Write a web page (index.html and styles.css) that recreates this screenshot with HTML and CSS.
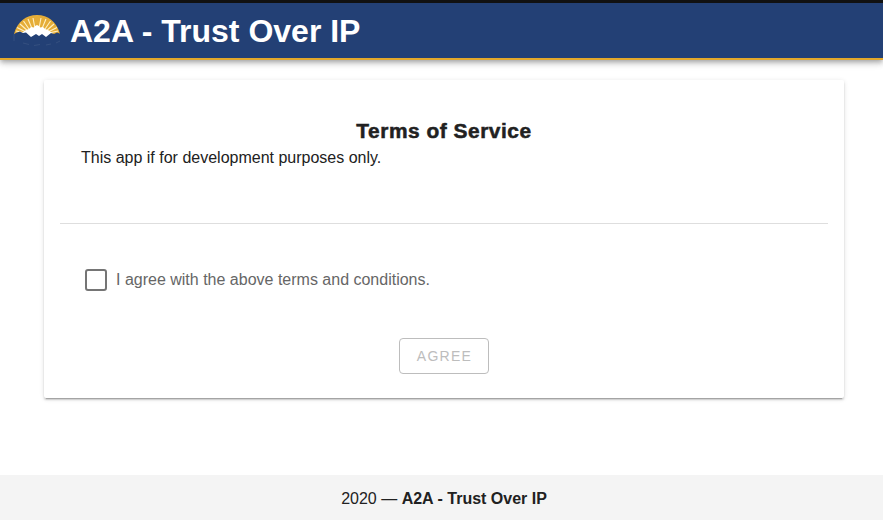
FILE: index.html
```html
<!DOCTYPE html>
<html lang="en">
<head>
<meta charset="utf-8">
<title>A2A - Trust Over IP</title>
<link rel="stylesheet" href="styles.css">
</head>
<body>
<header class="app-bar">
  <svg class="logo" viewBox="0 0 50 35" aria-hidden="true">
    <path d="M1 20C4 8 13 1 24 1s20 7 23 19l-7 1-5 2H13l-5-2z" fill="#e5ad38"/>
    <g stroke="#fff0c4" stroke-width="1.100" fill="none">
      <path d="M22.500 17L20 4M25.500 17L28 4M20 17L15 5M28 17l5-12M18 18L10.500 7M30 18l7.500-11M16 18L7 10M32 18l9-8M14 18.500L4 13.500M34 18.500l10-5M12 19l-9-2M36 19l9-2"/>
    </g>
    <path d="M8 20l4-3.500 4-1.500 2-2 3 .5 1-1.500 2-1 2 1 1 1.500 3-.5 2 2 4 1.500 4 3.500-5 4H13z" fill="#fff"/>
    <path d="M1 20l3-1.500 3-1 3 1.500 3-.5 5 4.500 5-3 3 2 3-2 4 3 5-4 3 1 3-1.500 4 1.500v6H1z" fill="#234075"/>
    <path d="M1 20v7M10 29l6 1.500m5 1l6-1m6 .5l5-1m5-1l4-2" fill="none" stroke="#3c5684" stroke-width=".7"/>
  </svg>
  <h1 class="app-title">A2A - Trust Over IP</h1>
</header>
<main class="content">
  <section class="card">
    <h2 class="card-title">Terms of Service</h2>
    <p class="terms">This app if for development purposes only.</p>
    <hr class="divider">
    <label class="consent"><input class="checkbox" type="checkbox"><span>I agree with the above terms and conditions.</span></label>
    <button class="agree" disabled>AGREE</button>
  </section>
</main>
<footer class="footer"><span>2020 — <strong>A2A - Trust Over IP</strong></span></footer>
</body>
</html>
```
FILE: styles.css
```css
* { box-sizing: border-box; }
body {
  margin: 0;
  height: 520px;
  display: flex;
  flex-direction: column;
  overflow: hidden;
  background: #fff;
  color: #212121;
  font: 16px/24px "Liberation Sans", Arial, sans-serif;
}
.app-bar {
  height: 60px;
  flex: none;
  display: flex;
  align-items: center;
  padding-left: 13px;
  background: #234075;
  border-top: 3px solid #111;
  border-bottom: 2px solid #e3a82b;
  box-shadow: 0 2px 4px -1px rgba(0,0,0,.2), 0 4px 5px rgba(0,0,0,.14), 0 1px 10px rgba(0,0,0,.12);
}
.logo { width: 50px; height: 35px; margin-top: 2px; }
.app-title { margin: 0 0 0 7px; color: #fff; font-size: 32px; line-height: 40px; }
.content { flex: 1; padding: 20px 39px 0 44px; }
.card {
  height: 318px;
  padding: 39px 16px 0;
  display: flex;
  flex-direction: column;
  border-radius: 2px;
  box-shadow: 0 3px 1px -2px rgba(0,0,0,.2), 0 2px 2px rgba(0,0,0,.14), 0 1px 5px rgba(0,0,0,.12);
}
.card-title {
  margin: 0;
  text-align: center;
  font-size: 20px;
  line-height: 24px;
  letter-spacing: .5px;
  transform: scaleX(1.045);
  -webkit-text-stroke: .5px #212121;
}
.terms { margin: 3px 21px 0; }
.divider { width: 100%; height: 1px; margin: 53px 0 0; border: 0; background: #dedede; }
.consent { display: flex; align-items: center; margin: 44px 0 0 25px; color: #666; }
.checkbox { appearance: none; width: 22px; height: 22px; margin: 0 9px 0 0; border: 2px solid #757575; border-radius: 3px; }
.agree {
  align-self: center;
  width: 90px;
  height: 36px;
  margin-top: 46px;
  padding: 0 0 0 1px;
  border: 1px solid #bdbdbd;
  border-radius: 4px;
  background: #fff;
  color: #bdbdbd;
  font: 14px "Liberation Sans", Arial, sans-serif;
  letter-spacing: 1.25px;
}
.footer { height: 45px; flex: none; display: flex; align-items: center; justify-content: center; padding: 2px 0 0 5px; background: #f4f4f4; }
```
